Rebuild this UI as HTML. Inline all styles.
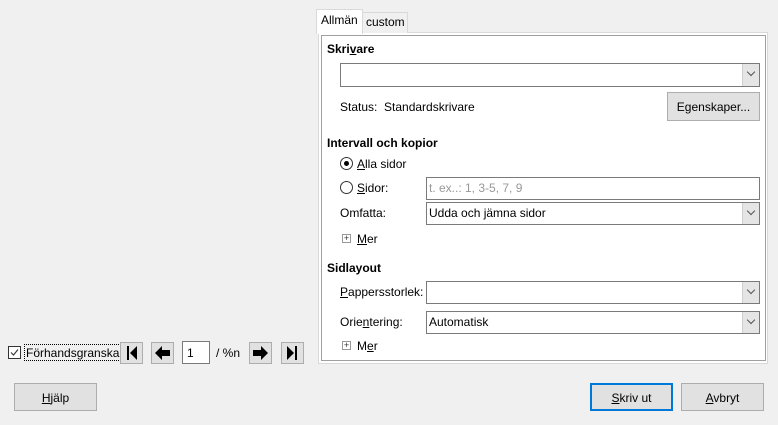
<!DOCTYPE html>
<html><head><meta charset="utf-8"><style>
*{box-sizing:border-box;margin:0;padding:0}
body{width:778px;height:425px;background:#f0f0f0;font-family:"Liberation Sans",sans-serif;font-size:12px;color:#000;position:relative;overflow:hidden}
.a{position:absolute;white-space:nowrap}
.b{font-weight:bold}
.btn{position:absolute;background:#e1e1e1;border:1px solid #adadad;text-align:center}
.cb{position:absolute;background:#fff;border:1px solid #7a7a7a}
.cb .dd{position:absolute;right:0;top:0;bottom:0;width:17px;background:#e5e5e5;border-left:1px solid #cfcfcf}
.cb .dd:after{content:"";position:absolute;left:5px;top:5px;width:5px;height:5px;border-right:1px solid #555;border-bottom:1px solid #555;transform:rotate(45deg)}
.cb span{position:absolute;left:2px;top:3px}
.u{text-decoration:underline}
.plus{position:absolute;width:9px;height:9px;border:1px solid #999;background:#fff;font-size:9px;line-height:7px;text-align:center;color:#333}
.nav{position:absolute;width:23px;height:22px;background:#e1e1e1;border:1px solid #adadad}
</style></head><body>
<div class="a" style="left:318px;top:32px;width:450px;height:332px;border:1px solid #d9d9d9;background:#fff"></div>
<div class="a" style="left:321px;top:35px;width:445px;height:326px;border:1px solid #a0a0a0;background:#fff"></div>
<div class="a" style="left:316px;top:9px;width:47px;height:25px;background:#fff;border:1px solid #d9d9d9;border-bottom:none;padding:3px 0 0 4px">Allmän</div>
<div class="a" style="left:362px;top:12px;width:46px;height:21px;background:#f0f0f0;border:1px solid #d9d9d9;border-bottom:none;padding:2px 0 0 3px">custom</div>

<div class="a b" style="left:327px;top:42px">Skri<span class="u">v</span>are</div>
<div class="cb" style="left:340px;top:63px;width:420px;height:24px"><div class="dd"></div></div>
<div class="a" style="left:340px;top:100px">Status:&nbsp; Standardskrivare</div>
<div class="btn" style="left:667px;top:92px;width:93px;height:29px;padding-top:7px">E<span class="u">g</span>enskaper...</div>

<div class="a b" style="left:327px;top:136px">Intervall och kopior</div>
<div class="a" style="left:340px;top:157px;width:13px;height:13px;border:1px solid #333;border-radius:50%;background:#fff"><div style="position:absolute;left:3px;top:3px;width:5px;height:5px;border-radius:50%;background:#000"></div></div>
<div class="a" style="left:357px;top:157px"><span class="u">A</span>lla sidor</div>
<div class="a" style="left:340px;top:181px;width:13px;height:13px;border:1px solid #333;border-radius:50%;background:#fff"></div>
<div class="a" style="left:357px;top:181px"><span class="u">S</span>idor:</div>
<div class="cb" style="left:426px;top:177px;width:334px;height:23px"><span style="color:#999">t. ex..: 1, 3-5, 7, 9</span></div>
<div class="a" style="left:340px;top:206px">Omfatta:</div>
<div class="cb" style="left:426px;top:202px;width:334px;height:23px"><span>Udda och jämna sidor</span><div class="dd"></div></div>
<div class="plus" style="left:342px;top:234px">+</div>
<div class="a" style="left:357px;top:232px"><span class="u">M</span>er</div>

<div class="a b" style="left:327px;top:261px">Sidlayout</div>
<div class="a" style="left:340px;top:285px"><span class="u">P</span>appersstorlek:</div>
<div class="cb" style="left:426px;top:281px;width:334px;height:23px"><div class="dd"></div></div>
<div class="a" style="left:340px;top:315px">Orie<span class="u">n</span>tering:</div>
<div class="cb" style="left:426px;top:311px;width:334px;height:23px"><span>Automatisk</span><div class="dd"></div></div>
<div class="plus" style="left:342px;top:341px">+</div>
<div class="a" style="left:357px;top:339px">M<span class="u">e</span>r</div>

<div class="a" style="left:8px;top:346px;width:13px;height:13px;border:1px solid #333;background:#fff"><svg width="11" height="11" style="position:absolute;left:0;top:0"><path d="M2 5.5 L4.5 8 L9 2.5" stroke="#333" fill="none" stroke-width="1.1"/></svg></div>
<div class="a" style="left:24px;top:344px;height:17px;border:1px dotted #000;padding:1px 1px">Förhandsgranska</div>
<div class="nav" style="left:120px;top:342px"><svg width="21" height="20"><rect x="6" y="3" width="2" height="14"/><path d="M16 3 L9 10 L16 17Z"/></svg></div>
<div class="nav" style="left:151px;top:342px"><svg width="21" height="20"><path d="M3 10 L10 3 L10 7 L18 7 L18 13 L10 13 L10 17Z"/></svg></div>
<div class="a" style="left:182px;top:341px;width:28px;height:23px;background:#fff;border:1px solid #7a7a7a;padding:4px 0 0 4px">1</div>
<div class="a" style="left:216px;top:346px">/ %n</div>
<div class="nav" style="left:249px;top:342px"><svg width="21" height="20"><path d="M18 10 L11 3 L11 7 L3 7 L3 13 L11 13 L11 17Z"/></svg></div>
<div class="nav" style="left:281px;top:342px"><svg width="21" height="20"><rect x="13" y="3" width="2" height="14"/><path d="M5 3 L12 10 L5 17Z"/></svg></div>

<div class="btn" style="left:14px;top:383px;width:83px;height:28px;padding-top:7px"><span class="u">H</span>jälp</div>
<div class="btn" style="left:590px;top:383px;width:83px;height:28px;padding-top:6px;border:2px solid #0078d7"><span class="u">S</span>kriv ut</div>
<div class="btn" style="left:681px;top:383px;width:83px;height:28px;padding-top:7px"><span class="u">A</span>vbryt</div>
</body></html>
